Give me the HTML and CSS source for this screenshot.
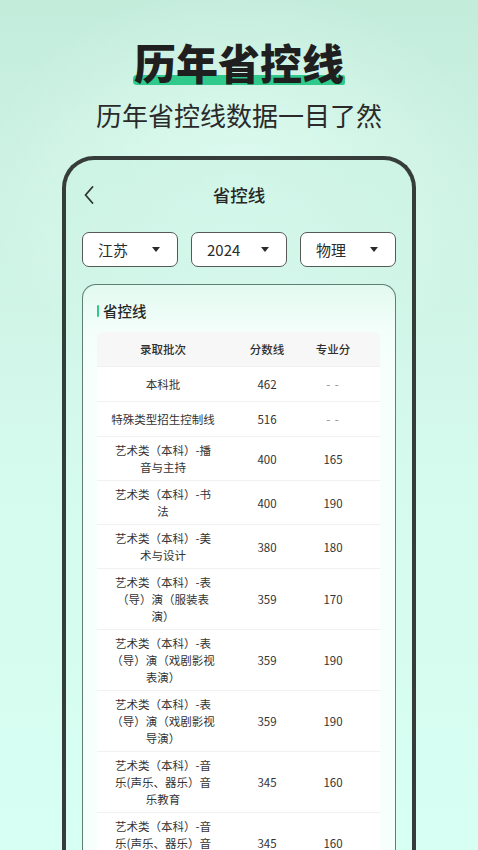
FILE: index.html
```html
<!DOCTYPE html>
<html lang="zh-CN">
<head>
<meta charset="utf-8">
<title>省控线</title>
<link rel="stylesheet" href="styles.css">
</head>
<body>
<div class="page">
  <header class="hero">
    <h1 class="hero-title">历年省控线</h1>
    <p class="hero-sub">历年省控线数据一目了然</p>
  </header>

  <div class="phone">
    <div class="nav">
      <span class="back">
        <svg width="10" height="18" viewBox="0 0 10 18"><path d="M8.5 1 L1.5 9 L8.5 17" fill="none" stroke="#2f3432" stroke-width="1.8" stroke-linecap="round" stroke-linejoin="round"/></svg>
      </span>
      <span class="nav-title">省控线</span>
      <span></span>
    </div>

    <div class="filters">
      <div class="select"><span>江苏</span><i class="caret"></i></div>
      <div class="select"><span>2024</span><i class="caret"></i></div>
      <div class="select"><span>物理</span><i class="caret"></i></div>
    </div>

    <section class="card">
      <h2 class="card-title">省控线</h2>
      <div class="table">
        <div class="row head"><div>录取批次</div><div>分数线</div><div>专业分</div></div>
        <div class="row"><div>本科批</div><div>462</div><div class="dash">- -</div></div>
        <div class="row"><div>特殊类型招生控制线</div><div>516</div><div class="dash">- -</div></div>
        <div class="row"><div>艺术类（本科）-播<br>音与主持</div><div>400</div><div>165</div></div>
        <div class="row"><div>艺术类（本科）-书<br>法</div><div>400</div><div>190</div></div>
        <div class="row"><div>艺术类（本科）-美<br>术与设计</div><div>380</div><div>180</div></div>
        <div class="row"><div>艺术类（本科）-表<br>（导）演（服装表<br>演）</div><div>359</div><div>170</div></div>
        <div class="row"><div>艺术类（本科）-表<br>（导）演（戏剧影视<br>表演）</div><div>359</div><div>190</div></div>
        <div class="row"><div>艺术类（本科）-表<br>（导）演（戏剧影视<br>导演）</div><div>359</div><div>190</div></div>
        <div class="row"><div>艺术类（本科）-音<br>乐(声乐、器乐）音<br>乐教育</div><div>345</div><div>160</div></div>
        <div class="row"><div>艺术类（本科）-音<br>乐(声乐、器乐）音<br>乐表演</div><div>345</div><div>160</div></div>
      </div>
    </section>
  </div>
</div>
</body>
</html>
```

FILE: styles.css
```css
* { box-sizing: border-box; }

html, body {
  margin: 0;
  padding: 0;
}

body {
  width: 478px;
  height: 850px;
  overflow: hidden;
  font-family: "Noto Sans CJK SC", "Noto Sans", sans-serif;
  color: #2b2b2b;
  background:
    radial-gradient(ellipse 260px 200px at 50% 22%, rgba(226, 253, 244, 0.85) 0%, rgba(226, 253, 244, 0) 100%),
    linear-gradient(180deg, #c4ecdb 0%, #cdf3e4 25%, #d5faee 55%, #d8fff3 100%);
}

.page {
  width: 478px;
  height: 850px;
}

.hero {
  padding-top: 41px;
  text-align: center;
}

.hero-title {
  position: relative;
  isolation: isolate;
  display: block;
  width: fit-content;
  margin: 0 auto;
  font-size: 42px;
  line-height: 42px;
  font-weight: 900;
  color: #1f1f1f;
  letter-spacing: 0;
}

.hero-title::before {
  content: "";
  position: absolute;
  left: -1px;
  right: -1px;
  bottom: -2px;
  height: 10px;
  border-radius: 4px 2px 2px 4px;
  background: #2fca8b;
  z-index: -1;
}

.hero-sub {
  margin: 19px 0 0;
  font-size: 26px;
  line-height: 26px;
  font-weight: 400;
  color: #2a2a2a;
}

.phone {
  margin: 28px 0 0 62px;
  width: 354px;
  height: 740px;
  border: 4px solid #363c3a;
  border-bottom: none;
  border-radius: 32px 32px 0 0;
  background: linear-gradient(180deg, rgba(200, 242, 226, 0.6) 0%, rgba(214, 250, 238, 0.3) 30%, rgba(216, 255, 243, 0) 60%);
}

.nav {
  height: 70px;
  display: grid;
  grid-template-columns: 1fr auto 1fr;
  align-items: center;
}

.back {
  display: flex;
  align-items: center;
  padding-left: 18px;
}

.back svg { display: block; }

.nav-title {
  font-size: 17.5px;
  line-height: 24px;
  font-weight: 500;
  color: #262626;
}

.filters {
  margin: 2px 16px 0;
  display: grid;
  grid-template-columns: repeat(3, 1fr);
  column-gap: 13px;
}

.select {
  height: 35px;
  display: flex;
  align-items: center;
  justify-content: space-between;
  padding: 0 17px 0 15px;
  background: #ffffff;
  border: 1px solid #555a58;
  border-radius: 7px;
  font-size: 15px;
  color: #2b2b2b;
}

.caret {
  display: block;
  width: 0;
  height: 0;
  border-left: 4.5px solid transparent;
  border-right: 4.5px solid transparent;
  border-top: 5px solid #2b2b2b;
}

.card {
  margin: 17px 16px 0;
  height: 600px;
  border: 1px solid #5f7f76;
  border-bottom: none;
  border-radius: 14px 14px 0 0;
  padding: 0 15px 0 14px;
  background: linear-gradient(180deg, #e2faf0 0%, #f3fefa 45px, #f7fffc 100px, #f7fffc 100%);
}

.card-title {
  margin: 0;
  padding-top: 16px;
  display: flex;
  align-items: center;
  gap: 4px;
  font-size: 14.5px;
  line-height: 20px;
  font-weight: 500;
  color: #262626;
}

.card-title::before {
  content: "";
  width: 2px;
  height: 12px;
  background: #2fca8b;
  border-radius: 1px;
}

.table {
  margin-top: 11px;
}

.row {
  display: grid;
  grid-template-columns: 132px 76px 56px;
  padding: 5px 19px 4px 0;
  min-height: 35px;
  align-items: center;
  background: #ffffff;
  border-bottom: 1px solid #f1f1f1;
  font-size: 11.5px;
  line-height: 17px;
  color: #333333;
  text-align: center;
}

.row > div {
  white-space: nowrap;
}

.row.head {
  background: #f7f7f7;
  border-radius: 6px 6px 0 0;
  border-bottom-color: #f0f0f0;
  font-weight: 500;
  color: #2f2f2f;
}

.dash {
  color: #8a8a8a;
  letter-spacing: 1px;
}
```
